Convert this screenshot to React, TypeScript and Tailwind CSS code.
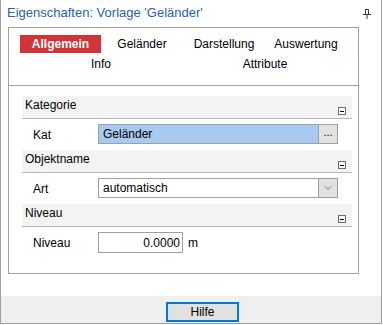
import { ChevronDown } from 'lucide-react';

function MinusBox() {
  return (
    <span className="mb-[3px] mr-[6px] flex h-[8px] w-[8px] items-center justify-center border border-[#6e6e6e] bg-white">
      <span className="h-px w-[4px] bg-black" />
    </span>
  );
}

function Section({ title, children }: { title: string; children: React.ReactNode }) {
  return (
    <div>
      <div className="flex h-[23px] items-end justify-between border-b border-[#b9b9b9] bg-[#f3f3f3]">
        <span className="mb-[4px] pl-[3px] text-black">{title}</span>
        <MinusBox />
      </div>
      <div className="flex h-[31px] items-start pt-[5px]">
        {children}
      </div>
    </div>
  );
}

export default function App() {
  return (
    <div className="h-[325px] w-[383px] bg-white font-['Liberation_Sans',Arial,sans-serif] text-[12px] text-black">
      <div className="flex h-[324px] w-[382px] flex-col border-x border-b border-[#a0a0a0]">
        <div className="flex h-[27px] items-start justify-between">
          <span className="pl-[6px] pt-[5px] text-[13px] leading-[15px] text-[#2a63a8]">
            Eigenschaften: Vorlage 'Geländer'
          </span>
          <svg width="8" height="10" viewBox="0 0 8 10" className="mr-[10px] mt-[9px]">
            <path d="M2.5 0.5h3v5h-3z" fill="none" stroke="#333" />
            <path d="M0 5.5h8M4 5.5v4.5" stroke="#333" />
          </svg>
        </div>

        <div className="ml-[7px] w-[351px]">
          <div className="h-[59px] border border-[#a0a0a0] pt-[7px]">
            <div className="flex pl-[11px]">
              <div className="flex h-[18px] w-[81px] items-center justify-center bg-[#d13438] font-bold text-white">
                Allgemein
              </div>
              <div className="flex h-[18px] w-[82px] items-center justify-center">Geländer</div>
              <div className="flex h-[18px] w-[82px] items-center justify-center">Darstellung</div>
              <div className="flex h-[18px] w-[82px] items-center justify-center">Auswertung</div>
            </div>
            <div className="mt-[2px] flex pl-[51px]">
              <div className="flex h-[18px] w-[82px] items-center justify-center">Info</div>
              <div className="w-[82px]" />
              <div className="flex h-[18px] w-[82px] items-center justify-center">Attribute</div>
            </div>
          </div>

          <div className="h-[188px] border-x border-b border-[#a0a0a0] pl-[13px] pt-[10px]">
            <div className="w-[330px]">
              <Section title="Kategorie">
                <span className="w-[76px] pl-[11px] pt-[2px]">Kat</span>
                <div className="flex h-[20px] w-[240px] border border-[#a0a0a0]">
                  <div className="flex flex-1 items-center bg-[#a6caf0] pl-[4px]">Geländer</div>
                  <div className="flex w-[19px] items-center justify-center border-l border-[#a0a0a0] bg-[#e1e1e1] pb-[4px] text-[11px]">
                    ...
                  </div>
                </div>
              </Section>
              <Section title="Objektname">
                <span className="w-[76px] pl-[11px] pt-[2px]">Art</span>
                <div className="flex h-[20px] w-[240px] border border-[#a0a0a0]">
                  <div className="flex flex-1 items-center bg-white pl-[4px]">automatisch</div>
                  <div className="flex w-[19px] items-center justify-center border-l border-[#a0a0a0] bg-[#e1e1e1]">
                    <ChevronDown size={12} strokeWidth={1.5} color="#555" />
                  </div>
                </div>
              </Section>
              <Section title="Niveau">
                <span className="w-[76px] pl-[11px] pt-[2px]">Niveau</span>
                <div className="flex h-[21px] w-[85px] items-center justify-end border border-[#a0a0a0] pr-[2px]">
                  0.0000
                </div>
                <span className="pl-[5px] pt-[2px]">m</span>
              </Section>
            </div>
          </div>
        </div>

        <div className="mt-[22px] flex-1 bg-[#efefef] pl-[165px] pt-[6px]">
          <button className="flex h-[20px] w-[73px] items-center justify-center border-2 border-[#0078d7] bg-[#e1e1e1] text-black">
            Hilfe
          </button>
        </div>
      </div>
    </div>
  );
}
